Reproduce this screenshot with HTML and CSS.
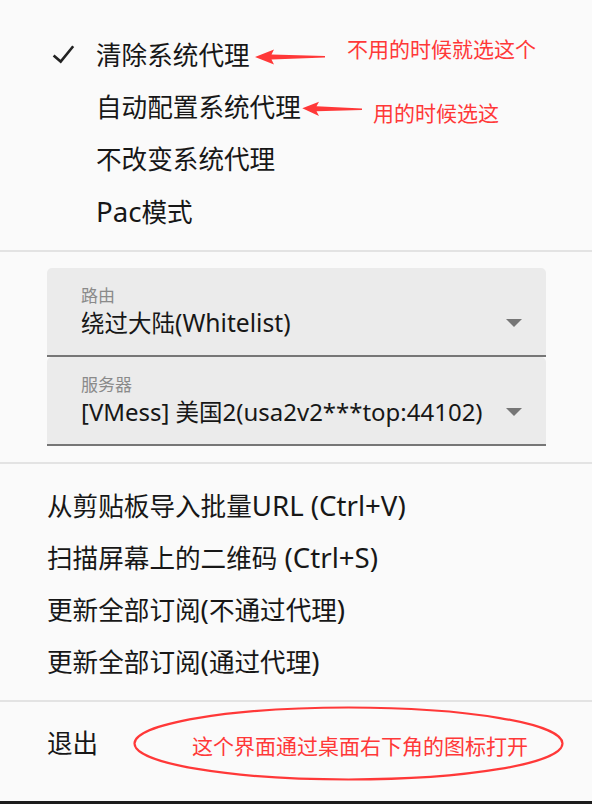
FILE: index.html
```html
<!DOCTYPE html>
<html lang="zh-CN">
<head>
<meta charset="utf-8">
<title>菜单</title>
<link rel="stylesheet" href="styles.css">
</head>
<body>
<div class="menu">
  <section class="sec sec-top">
    <div class="item mode">
      <svg class="check" width="28" height="52" viewBox="0 0 28 52"><polyline points="5.6,25.4 12.7,31.6 25.2,16.2" fill="none" stroke="#222" stroke-width="2.6" stroke-linejoin="miter"/></svg>
      <span>清除系统代理</span>
    </div>
    <div class="item mode"><span class="slot"></span><span>自动配置系统代理</span></div>
    <div class="item mode"><span class="slot"></span><span>不改变系统代理</span></div>
    <div class="item mode"><span class="slot"></span><span><span class="lat">Pac</span>模式</span></div>
  </section>
  <div class="sep"></div>
  <section class="sec sec-drop">
    <div class="field">
      <div class="label">路由</div>
      <div class="value-row"><span class="value">绕过大陆<span class="lat-w">(Whitelist)</span></span><span class="caret"></span></div>
    </div>
    <div class="field">
      <div class="label">服务器</div>
      <div class="value-row"><span class="value"><span class="lat-s">[VMess] </span>美国<span class="lat-s">2(usa2v2***top:44102)</span></span><span class="caret"></span></div>
    </div>
  </section>
  <div class="sep"></div>
  <section class="sec sec-actions">
    <div class="item action"><span>从剪贴板导入批量<span class="lat">URL (Ctrl+V)</span></span></div>
    <div class="item action"><span>扫描屏幕上的二维码<span class="lat"> (Ctrl+S)</span></span></div>
    <div class="item action"><span>更新全部订阅<span class="lat">(</span>不通过代理<span class="lat">)</span></span></div>
    <div class="item action"><span>更新全部订阅<span class="lat">(</span>通过代理<span class="lat">)</span></span></div>
  </section>
  <div class="sep"></div>
  <section class="sec sec-exit">
    <div class="item action">退出</div>
  </section>
</div>
<div class="bottom-edge"></div>

<svg class="annot-shapes" width="592" height="804" viewBox="0 0 592 804">
  <polygon points="255,57 274,49.5 271.5,54.6 325,56 325,57.6 271.5,59.4 274,64.5" fill="#ff3838"/>
  <polygon points="302.3,108.3 319,101.7 316.5,106.3 362,108.6 362,110 316.5,111.2 319,116" fill="#ff3838"/>
  <ellipse cx="348.5" cy="743.5" rx="214" ry="36" fill="none" stroke="#ff3838" stroke-width="2.2"/>
</svg>
<div class="note note-1">不用的时候就选这个</div>
<div class="note note-2">用的时候选这</div>
<div class="note note-3">这个界面通过桌面右下角的图标打开</div>
</body>
</html>
```
FILE: styles.css
```css
html, body {
  margin: 0;
  padding: 0;
}
body {
  width: 592px;
  height: 804px;
  background: #fafafa;
  font-family: "Noto Sans", "Noto Sans CJK SC", sans-serif;
  color: #171717;
  position: relative;
  overflow: hidden;
}
.menu {
  display: flex;
  flex-direction: column;
}
.sec {
  display: flex;
  flex-direction: column;
}
.sec-top {
  padding: 30px 0 12px;
}
.sec-drop {
  padding: 16px 46px 16px 47px;
}
.sec-actions {
  padding: 16px 0 12px;
}
.sec-exit {
  padding: 16px 0 0;
}
.sep {
  height: 2px;
  background: #e3e3e3;
}
.item {
  height: 52px;
  line-height: 52px;
  font-size: 25.6px;
  white-space: nowrap;
  display: flex;
  align-items: center;
}
.lat {
  font-size: 1.08em;
}
.lat-w {
  font-size: 1.05em;
}
.lat-s {
  font-size: 1.02em;
}
.mode {
  padding-left: 48px;
}
.check, .slot {
  width: 28px;
  height: 52px;
  margin-right: 20px;
  flex: none;
}
.action {
  padding-left: 47px;
}
.field {
  background: #ebebeb;
  border-radius: 5px 5px 0 0;
  border-bottom: 2px solid #767676;
  padding: 17px 24px 16px 34px;
}
.label {
  font-size: 17px;
  line-height: 22px;
  color: #8a8a8a;
}
.value-row {
  display: flex;
  align-items: center;
  justify-content: space-between;
  height: 32px;
}
.value {
  font-size: 23.5px;
  line-height: 32px;
  color: #171717;
  white-space: nowrap;
}
.caret {
  width: 0;
  height: 0;
  border-left: 8px solid transparent;
  border-right: 8px solid transparent;
  border-top: 8px solid #767676;
  flex: none;
}
.bottom-edge {
  position: absolute;
  left: 0;
  right: 0;
  bottom: 0;
  height: 3px;
  background: #1c1c1c;
}
.annot-shapes {
  position: absolute;
  left: 0;
  top: 0;
  pointer-events: none;
}
.note {
  position: absolute;
  color: #ff3838;
  font-size: 21px;
  line-height: 24px;
  white-space: nowrap;
  font-family: "Noto Sans CJK SC", sans-serif;
}
.note-1 {
  left: 347px;
  top: 36px;
}
.note-2 {
  left: 373px;
  top: 100px;
}
.note-3 {
  left: 192px;
  top: 733px;
}
```
